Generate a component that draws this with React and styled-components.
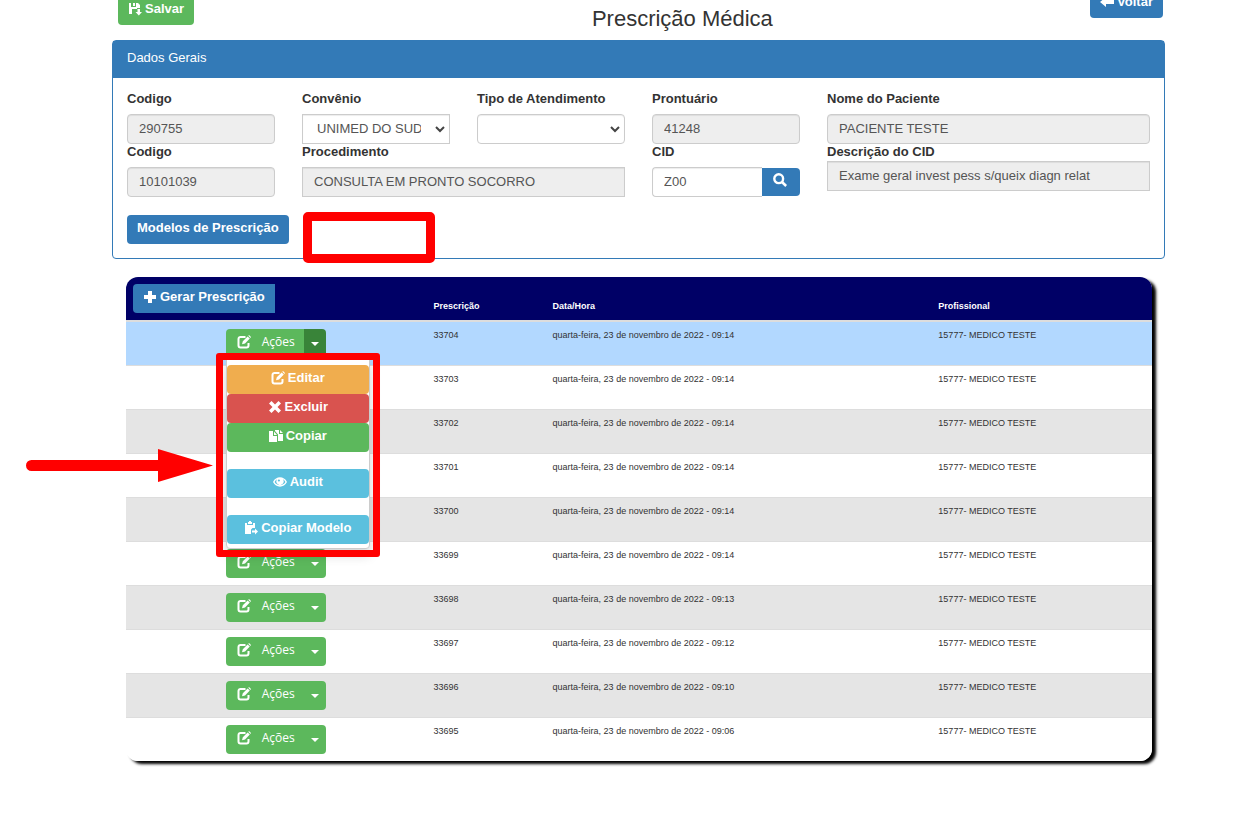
import React from "react";
import styled, { createGlobalStyle, css } from "styled-components";

const GlobalStyle = createGlobalStyle`
  *, *::before, *::after { box-sizing: border-box; }
  body {
    margin: 0;
    background: #fff;
    color: #333;
    font-family: "Liberation Sans", Arial, sans-serif;
    font-size: 13px;
  }
  button, input, select { font-family: inherit; }
`;

const tones = {
  primary: "#337ab7",
  success: "#5cb85c",
  warning: "#f0ad4e",
  danger: "#d9534f",
  info: "#5bc0de",
};

const Page = styled.main`
  padding: 0 92px 0 112px;
`;

const Header = styled.header`
  display: grid;
  grid-template-columns: 2fr 9fr 1fr;
  align-items: start;
  height: 51px;
  margin-top: -11px;
`;

const HeaderStart = styled.div`
  padding: 7px 0 0 6px;
`;

const HeaderEnd = styled.div`
  display: flex;
  justify-content: flex-end;
  padding-right: 2px;
`;

const Title = styled.h1`
  margin: 0;
  padding-top: 17px;
  text-align: center;
  font-size: 22px;
  line-height: 26px;
  font-weight: 400;
`;

const Button = styled.button`
  display: inline-flex;
  align-items: center;
  justify-content: center;
  gap: 3px;
  height: 29px;
  padding: 0 10px 3px;
  border: 0;
  border-radius: ${(p) => (p.$squareEnd ? "4px 0 0 4px" : "4px")};
  background: ${(p) => tones[p.$tone]};
  color: #fff;
  font-size: 13px;
  line-height: 20px;
  font-weight: 700;
  white-space: nowrap;
  cursor: pointer;
`;

const Svg = styled.svg`
  width: 14px;
  height: 14px;
  flex: none;
  fill: currentColor;
`;

const Panel = styled.section`
  border: 1px solid #337ab7;
  border-radius: 4px;
`;

const PanelTitle = styled.h2`
  margin: 0;
  padding: 7px 14px 10px;
  background: #337ab7;
  color: #fff;
  font-size: 13px;
  line-height: 20px;
  font-weight: 400;
`;

const PanelBody = styled.form`
  padding: 13px 14px 14px;
`;

const FieldGrid = styled.div`
  display: grid;
  grid-template-columns: repeat(6, minmax(0, 1fr));
  column-gap: 27px;
`;

const Field = styled.div`
  grid-column: span ${(p) => p.$span || 1};
  display: flex;
  flex-direction: column;
  gap: ${(p) => (p.$tight ? "2px" : "8px")};
`;

const Label = styled.label`
  font-size: 13px;
  line-height: 15px;
  font-weight: 700;
`;

const control = css`
  width: 100%;
  height: 30px;
  border: 1px solid #ccc;
  border-radius: ${(p) => (p.$square ? "0" : "4px")};
  color: #555;
  font-size: 13px;
  box-shadow: inset 0 1px 1px rgba(0, 0, 0, 0.075);
`;

const Input = styled.input`
  ${control}
  padding: 0 11px 2px;
  background: ${(p) => (p.readOnly ? "#eee" : "#fff")};
`;

const SelectBox = styled.div`
  position: relative;
`;

const Select = styled.select`
  ${control}
  display: block;
  appearance: none;
  padding: 0 28px 2px 14px;
  background: #fff;
  text-overflow: clip;
`;

const Chevron = styled.svg`
  position: absolute;
  right: 5px;
  top: 12px;
  width: 10px;
  height: 7px;
  fill: none;
  stroke: #444;
  stroke-width: 2;
  pointer-events: none;
`;

const InputGroup = styled.div`
  display: flex;
  align-items: center;

  input {
    flex: 1;
    min-width: 0;
    border-right: 0;
    border-radius: 4px 0 0 4px;
  }
`;

const SearchButton = styled.button`
  display: flex;
  align-items: center;
  justify-content: center;
  width: 38px;
  height: 28px;
  padding: 0 2px 4px 0;
  border: 0;
  border-radius: 0 4px 4px 0;
  background: #337ab7;
  color: #fff;
`;

const PanelActions = styled.div`
  position: relative;
  display: flex;
  margin-top: 18px;
`;

const Highlight = styled.div`
  position: absolute;
  border: solid #f00;
  border-radius: 5px;
  pointer-events: none;
`;

const EmptyHighlight = styled(Highlight)`
  left: 176px;
  top: -3px;
  width: 132px;
  height: 51px;
  border-width: 9px;
`;

const MenuHighlight = styled(Highlight)`
  inset: -6px -11px -9px -11px;
  border-width: 7px;
  border-radius: 3px;
`;

const Arrow = styled.svg`
  position: absolute;
  right: 156px;
  top: 90px;
  width: 187px;
  height: 33px;
  fill: #f00;
  pointer-events: none;
`;

const TableCard = styled.div`
  margin: 18px 13px 54px 14px;
  border-radius: 12px;
  box-shadow: 4px 3px 3px #000;
`;

const Table = styled.table`
  width: 100%;
  table-layout: fixed;
  border-collapse: separate;
  border-spacing: 0;
  font-size: 9px;
  line-height: 12px;
`;

const HeadCell = styled.th`
  width: ${(p) => p.$width};
  height: 44px;
  padding: ${(p) => (p.$action ? "0 7px" : "0 8px 8px")};
  border-bottom: 1px solid #ddd;
  background: #006;
  color: #fff;
  text-align: left;
  vertical-align: ${(p) => (p.$action ? "middle" : "bottom")};

  &:first-child { border-top-left-radius: 12px; }
  &:last-child { border-top-right-radius: 12px; }
`;

const Row = styled.tr`
  --row: #fff;
  &:nth-child(odd) { --row: #e5e5e5; }
  &:first-child { --row: #b2d8ff; }
`;

const Cell = styled.td`
  height: 44px;
  padding: 7px 8px;
  border-top: 1px solid #ddd;
  background: var(--row);
  vertical-align: top;

  tr:last-child > &:first-child { border-bottom-left-radius: 12px; }
  tr:last-child > &:last-child { border-bottom-right-radius: 12px; }
`;

const ActionCell = styled(Cell)`
  padding: 7px 0;
`;

const ActionGroup = styled.div`
  position: relative;
  display: flex;
  width: 100px;
  margin: 0 auto;
`;

const ActionButton = styled.button`
  display: flex;
  align-items: center;
  gap: 11px;
  width: 78px;
  height: 29px;
  padding: 0 0 3px 11px;
  border: 0;
  border-radius: 4px 0 0 4px;
  background: #5cb85c;
  color: #fff;
  font: 12px/20px "Trebuchet MS", "Open Sans", sans-serif;
`;

const CaretButton = styled.button`
  display: flex;
  align-items: center;
  justify-content: center;
  width: 22px;
  height: 29px;
  padding: 0;
  border: 0;
  border-radius: 0 4px 4px 0;
  background: ${(p) => (p.$open ? "#398439" : "#5cb85c")};

  &::before {
    content: "";
    border: 4px solid transparent;
    border-top-color: #fff;
    border-bottom: 0;
  }
`;

const Menu = styled.div`
  position: absolute;
  z-index: 2;
  left: 0;
  top: 29px;
  width: 144px;
  padding: 6px 0 4px;
  border: 1px solid #ccc;
  border-radius: 0 0 4px 4px;
  background: #fff;
  box-shadow: 0 6px 12px rgba(0, 0, 0, 0.175);
`;

const MenuGroup = styled.div`
  display: flex;
  flex-direction: column;

  & + & { margin-top: 17px; }
`;

const icons = {
  save: (
    <>
      <path d="M1 1H3V5H8V1H10L12 3V6H9V7H4V12H1Z" />
      <path d="M5 1H7V4H5ZM9.500 7H12V10H14L10.800 13.500 7.500 10H9.500Z" />
    </>
  ),
  back: <path d="M0 7 6 2V5H14V9H6V12Z" />,
  plus: <path d="M5 1H9V5H13V9H9V13H5V9H1V5H5Z" />,
  search: (
    <>
      <circle cx="5.7" cy="5.7" r="4.4" fill="none" stroke="currentColor" strokeWidth="2.400" />
      <path d="M8.100 9.900 9.900 8.100 14 12.100 12.300 13.900Z" />
    </>
  ),
  edit: (
    <>
      <path
        d="M8.500 1.900H3.500A2 2 0 0 0 1.500 3.900V10.500A2 2 0 0 0 3.500 12.500H9.500A2 2 0 0 0 11.500 10.500V8"
        fill="none"
        stroke="currentColor"
        strokeWidth="2"
      />
      <path d="M5 9.200 5.800 6.200 10.600 1.400 12.800 3.600 8 8.400ZM11.300.8 12 .1 14 2 13.400 2.900Z" />
    </>
  ),
  remove: <path d="M1 3.500 3.500 1 7 4.500 10.500 1 13 3.500 9.500 7 13 10.500 10.500 13 7 9.500 3.500 13 1 10.500 4.500 7Z" />,
  copy: (
    <>
      <path d="M0 2H4V7H8V13H0ZM5 2.500 8 6H5Z" />
      <path d="M6 1H10V5H14V12H9V5.500L6 2ZM11 1 14 4H11Z" />
    </>
  ),
  eye: (
    <path
      fillRule="evenodd"
      d="M0 7C3 .8 11 .8 14 7C11 13.200 3 13.200 0 7ZM1.600 7C4 11.200 10 11.200 12.400 7C11.700 5.700 10.900 4.900 9.900 4.300A3.600 3.600 0 1 1 4.100 4.300C3.100 4.900 2.300 5.700 1.600 7ZM4.800 5.500A1.100 1.100 0 1 0 7 5.500A1.100 1.100 0 1 0 4.800 5.500Z"
    />
  ),
  paste: (
    <>
      <path d="M1 2H3V4H9V2H11V7H8.500L7 8.500V13H1ZM4 3V1H5V0H7V1H8V3Z" />
      <path d="M8 9.500H11V7.500L14 10.500 11 13.500V11.500H8Z" />
    </>
  ),
};

function Icon({ name }) {
  return (
    <Svg viewBox="0 0 14 14" aria-hidden="true">
      {icons[name]}
    </Svg>
  );
}

function TextField({ id, label, value, span, tight, square }) {
  return (
    <Field $span={span} $tight={tight}>
      <Label htmlFor={id}>{label}</Label>
      <Input id={id} defaultValue={value} readOnly $square={square} />
    </Field>
  );
}

function SelectField({ id, label, value, square }) {
  return (
    <Field>
      <Label htmlFor={id}>{label}</Label>
      <SelectBox>
        <Select id={id} $square={square}>
          <option>{value}</option>
        </Select>
        <Chevron viewBox="0 0 10 7">
          <path d="M1 1 5 5 9 1" />
        </Chevron>
      </SelectBox>
    </Field>
  );
}

function MenuItem({ tone, icon, children }) {
  return (
    <Button type="button" role="menuitem" $tone={tone}>
      <Icon name={icon} />
      {children}
    </Button>
  );
}

function ActionsMenu() {
  return (
    <Menu role="menu">
      <MenuGroup>
        <MenuItem tone="warning" icon="edit">Editar</MenuItem>
        <MenuItem tone="danger" icon="remove">Excluir</MenuItem>
        <MenuItem tone="success" icon="copy">Copiar</MenuItem>
      </MenuGroup>
      <MenuGroup>
        <MenuItem tone="info" icon="eye">Audit</MenuItem>
      </MenuGroup>
      <MenuGroup>
        <MenuItem tone="info" icon="paste">Copiar Modelo</MenuItem>
      </MenuGroup>
      <MenuHighlight />
      <Arrow viewBox="0 0 187 33">
        <path d="M5.500 11H132V0L187 16.500 132 33V22H5.500A5.500 5.500 0 0 1 5.500 11Z" />
      </Arrow>
    </Menu>
  );
}

const rows = [
  ["33704", "09:14"],
  ["33703", "09:14"],
  ["33702", "09:14"],
  ["33701", "09:14"],
  ["33700", "09:14"],
  ["33699", "09:14"],
  ["33698", "09:13"],
  ["33697", "09:12"],
  ["33696", "09:10"],
  ["33695", "09:06"],
];

export default function App() {
  return (
    <Page>
      <GlobalStyle />
      <Header>
        <HeaderStart>
          <Button type="button" $tone="success">
            <Icon name="save" />
            Salvar
          </Button>
        </HeaderStart>
        <Title>Prescrição Médica</Title>
        <HeaderEnd>
          <Button type="button" $tone="primary">
            <Icon name="back" />
            Voltar
          </Button>
        </HeaderEnd>
      </Header>

      <Panel>
        <PanelTitle>Dados Gerais</PanelTitle>
        <PanelBody>
          <FieldGrid>
            <TextField id="codigo" label="Codigo" value="290755" />
            <SelectField id="convenio" label="Convênio" value="UNIMED DO SUDOESTE" square />
            <SelectField id="tipo" label="Tipo de Atendimento" value="" />
            <TextField id="prontuario" label="Prontuário" value="41248" />
            <TextField id="paciente" label="Nome do Paciente" value="PACIENTE TESTE" span={2} />
            <TextField id="codigo-proc" label="Codigo" value="10101039" />
            <TextField id="procedimento" label="Procedimento" value="CONSULTA EM PRONTO SOCORRO" span={2} square />
            <Field>
              <Label htmlFor="cid">CID</Label>
              <InputGroup>
                <Input id="cid" defaultValue="Z00" />
                <SearchButton type="button" aria-label="Buscar CID">
                  <Icon name="search" />
                </SearchButton>
              </InputGroup>
            </Field>
            <TextField
              id="descricao"
              label="Descrição do CID"
              value="Exame geral invest pess s/queix diagn relat"
              span={2}
              tight
              square
            />
          </FieldGrid>
          <PanelActions>
            <Button type="button" $tone="primary">Modelos de Prescrição</Button>
            <EmptyHighlight />
          </PanelActions>
        </PanelBody>
      </Panel>

      <TableCard>
        <Table>
          <thead>
            <tr>
              <HeadCell $width="29.2%" $action>
                <Button type="button" $tone="primary" $squareEnd>
                  <Icon name="plus" />
                  Gerar Prescrição
                </Button>
              </HeadCell>
              <HeadCell $width="11.6%">Prescrição</HeadCell>
              <HeadCell $width="37.6%">Data/Hora</HeadCell>
              <HeadCell>Profissional</HeadCell>
            </tr>
          </thead>
          <tbody>
            {rows.map(([code, time], index) => (
              <Row key={code}>
                <ActionCell>
                  <ActionGroup>
                    <ActionButton type="button">
                      <Icon name="edit" />
                      Ações
                    </ActionButton>
                    <CaretButton type="button" aria-label="Abrir ações" $open={index === 0} />
                    {index === 0 && <ActionsMenu />}
                  </ActionGroup>
                </ActionCell>
                <Cell>{code}</Cell>
                <Cell>quarta-feira, 23 de novembro de 2022 - {time}</Cell>
                <Cell>15777- MEDICO TESTE</Cell>
              </Row>
            ))}
          </tbody>
        </Table>
      </TableCard>
    </Page>
  );
}
